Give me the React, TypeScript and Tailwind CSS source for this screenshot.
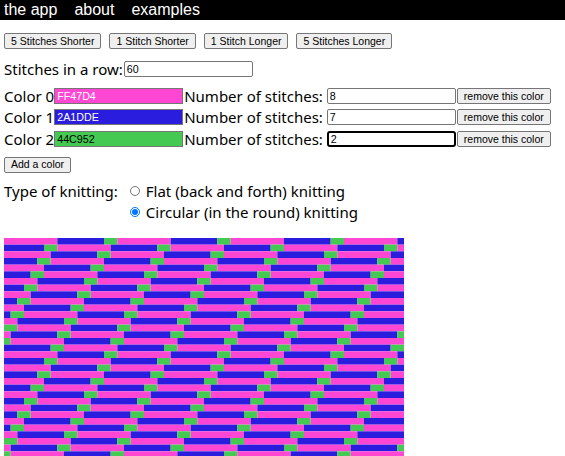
import React from "react";

const colors = [
  { hex: "FF47D4", count: 8, text: "text-white" },
  { hex: "2A1DDE", count: 7, text: "text-white" },
  { hex: "44C952", count: 2, text: "text-black" },
];

const STITCHES = 60;
const ROWS = 60;
const CELL = 400 / STITCHES;

function buildRuns() {
  const seq: string[] = [];
  colors.forEach(c => {
    for (let i = 0; i < c.count; i++) seq.push("#" + c.hex);
  });
  const runs: { x: number; y: number; w: number; fill: string }[] = [];
  for (let r = 0; r < ROWS; r++) {
    let start = 0;
    let cur = seq[(r * STITCHES) % seq.length];
    for (let c = 1; c <= STITCHES; c++) {
      const col = c < STITCHES ? seq[(r * STITCHES + c) % seq.length] : "";
      if (col !== cur) {
        runs.push({ x: start, y: r, w: c - start, fill: cur });
        start = c;
        cur = col;
      }
    }
  }
  return runs;
}

const Btn: React.FC<{ children: React.ReactNode }> = ({ children }) => (
  <button
    type="button"
    className="h-[16px] px-[6px] bg-[#efefef] border border-[#767676] rounded-[2px] text-[10.5px] leading-none text-black font-['Liberation_Sans',Arial,sans-serif] whitespace-nowrap"
  >
    {children}
  </button>
);

const inputBase =
  "w-[129px] h-[16px] px-[2px] text-[10.7px] font-['Liberation_Sans',Arial,sans-serif] outline-none";

export default function App() {
  const runs = buildRuns();
  return (
    <div className="min-h-screen bg-white text-black font-['Noto_Sans',sans-serif] text-[15px]">
      <nav className="h-5 bg-black flex items-center gap-[17px] px-[4px] text-white text-[16px] leading-5 font-['Liberation_Sans',Arial,sans-serif]">
        <span>the app</span>
        <span>about</span>
        <span>examples</span>
      </nav>

      <div className="px-[4px]">
        <div className="flex gap-[8px] mt-[13px] h-[16px]">
          <Btn>5 Stitches Shorter</Btn>
          <Btn>1 Stitch Shorter</Btn>
          <Btn>1 Stitch Longer</Btn>
          <Btn>5 Stitches Longer</Btn>
        </div>

        <div className="flex items-center mt-[10px] h-[20px]">
          <span>Stitches in a row:</span>
          <input
            readOnly
            value="60"
            className={`${inputBase} ml-[1px] border border-[#767676] rounded-[2px]`}
          />
        </div>

        <div className="flex flex-col mt-[6px]">
          {colors.map((c, i) => (
            <div key={c.hex} className="flex items-center h-[21.5px]">
              <span>Color {i}</span>
              <input
                readOnly
                value={c.hex}
                style={{ backgroundColor: "#" + c.hex }}
                className={`${inputBase} border border-[#767676] ${c.text}`}
              />
              <span className="ml-[1px]">Number of stitches:</span>
              <input
                readOnly
                value={String(c.count)}
                className={
                  i === 2
                    ? `${inputBase} ml-[4px] border-2 border-black rounded-[3px]`
                    : `${inputBase} ml-[4px] border border-[#767676] rounded-[2px]`
                }
              />
              <span className="flex ml-[1px]">
                <Btn>remove this color</Btn>
              </span>
            </div>
          ))}
        </div>

        <div className="flex mt-[7px] h-[16px]">
          <Btn>Add a color</Btn>
        </div>

        <div className="flex mt-[8px]">
          <span className="leading-[21px]">Type of knitting:</span>
          <div className="flex flex-col ml-[12px]">
            <label className="flex items-center h-[21px]">
              <input type="radio" name="kind" className="w-[10px] h-[10px] mr-[6px] accent-[#0075ff]" />
              Flat (back and forth) knitting
            </label>
            <label className="flex items-center h-[21px]">
              <input type="radio" name="kind" defaultChecked className="w-[10px] h-[10px] mr-[6px] accent-[#0075ff]" />
              Circular (in the round) knitting
            </label>
          </div>
        </div>

        <svg
          className="block mt-[15px]"
          width={400}
          height={ROWS * CELL}
          viewBox={`0 0 ${STITCHES} ${ROWS}`}
          preserveAspectRatio="none"
        >
          {runs.map((r, k) => (
            <rect key={k} x={r.x} y={r.y} width={r.w} height={1} fill={r.fill} />
          ))}
        </svg>
      </div>
    </div>
  );
}
